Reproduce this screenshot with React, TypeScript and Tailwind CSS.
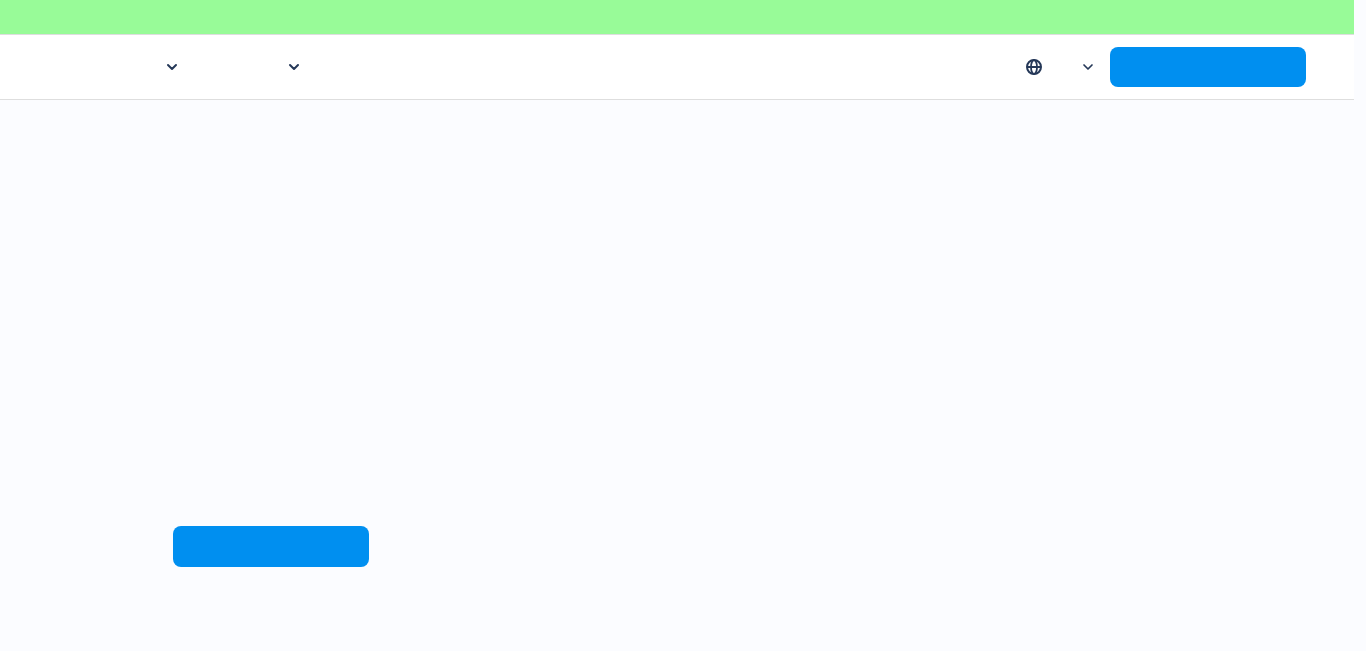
const menus = [
  { label: "Products", width: "w-[122px]" },
  { label: "Resources", width: "w-[122px]" },
];

function Chevron({ stroke }: { stroke: number }) {
  return (
    <svg
      viewBox="0 0 12 12"
      className="h-3 w-3 shrink-0"
      fill="none"
      stroke="#253858"
      strokeWidth={stroke}
      strokeLinecap="round"
      strokeLinejoin="round"
      aria-hidden="true"
    >
      <path d="M2 4l4 4 4-4" />
    </svg>
  );
}

function Globe() {
  return (
    <svg
      viewBox="0 0 16 16"
      className="h-4 w-4 shrink-0"
      fill="none"
      stroke="#253858"
      strokeWidth="2"
      aria-hidden="true"
    >
      <circle cx="8" cy="8" r="7" />
      <ellipse cx="8" cy="8" rx="3" ry="7" strokeWidth="1.8" />
      <path d="M1 8h14" />
    </svg>
  );
}

function Header() {
  return (
    <header className="mr-3">
      <div className="h-[34px] bg-[#98fb98]" />
      <div className="flex h-[66px] items-center justify-between border-y border-[#dedede] bg-white pr-12 pl-14">
        <nav className="flex items-center" aria-label="Main">
          {menus.map((menu) => (
            <button
              key={menu.label}
              type="button"
              aria-label={menu.label}
              className={`flex h-10 items-center justify-end ${menu.width}`}
            >
              <Chevron stroke={2} />
            </button>
          ))}
        </nav>
        <div className="flex items-center gap-4">
          <button
            type="button"
            aria-label="Language"
            className="flex h-10 w-[68px] items-center justify-between"
          >
            <Globe />
            <Chevron stroke={1.7} />
          </button>
          <button
            type="button"
            aria-label="Get started"
            className="h-10 w-[196px] rounded-lg bg-[#008ff0]"
          />
        </div>
      </div>
    </header>
  );
}

export default function App() {
  return (
    <div className="flex min-h-screen flex-col bg-[#fbfcff] font-['Inter',sans-serif]">
      <Header />
      <main className="flex flex-1 flex-col items-start justify-end px-[173px] pb-[84px]">
        <button
          type="button"
          aria-label="Get started today"
          className="h-[41px] w-[196px] rounded-lg bg-[#008ff0]"
        />
      </main>
    </div>
  );
}
